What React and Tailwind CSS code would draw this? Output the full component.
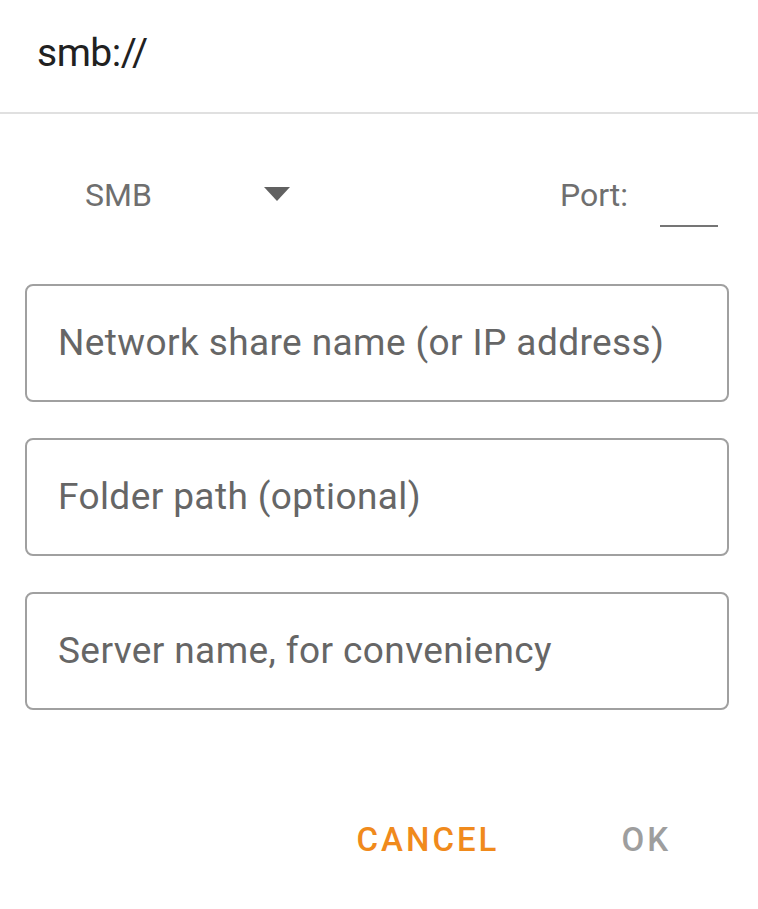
export default function App() {
  const fields = [
    "Network share name (or IP address)",
    "Folder path (optional)",
    "Server name, for conveniency",
  ];

  return (
    <div
      className="w-[758px] h-[909px] bg-white overflow-hidden"
      style={{ fontFamily: "Roboto, 'Liberation Sans', sans-serif" }}
    >
      {/* title */}
      <div className="h-[112px] pl-[37px] pt-[30px] text-[39px] leading-[46px] text-[#212121] tracking-[-0.5px]">
        smb://
      </div>
      <div className="h-[2px] bg-[#e0e0e0]" />

      {/* protocol + port row */}
      <div className="flex items-start h-[170px] pt-[64px]">
        <div className="flex items-center ml-[85px] h-[34px]">
          <span className="text-[32px] leading-[34px] text-[#6f6f6f]">SMB</span>
          <svg width="26" height="14" viewBox="0 0 26 14" className="ml-[112px] mb-[2px]">
            <path d="M0 0 H26 L13 14 Z" fill="#616161" />
          </svg>
        </div>
        <span className="ml-auto text-[32px] leading-[34px] text-[#6f6f6f]">Port:</span>
        <div className="ml-[32px] mr-[40px] mt-[47px] w-[58px] h-[2px] bg-[#757575]" />
      </div>

      {/* inputs */}
      <div className="flex flex-col gap-[36px] pl-[25px] pr-[29px]">
        {fields.map((f) => (
          <div
            key={f}
            className="h-[118px] border-2 border-[#a0a0a0] rounded-[8px] flex items-center pl-[31px] text-[37px] tracking-[0.4px] text-[#666666]"
          >
            {f}
          </div>
        ))}
      </div>

      {/* actions */}
      <div className="flex justify-end items-center mt-[105px] pr-[87px] gap-[122px] text-[33px] font-medium tracking-[3px]">
        <span className="text-[#f08a1c]">CANCEL</span>
        <span className="text-[#9e9e9e]">OK</span>
      </div>
    </div>
  );
}
